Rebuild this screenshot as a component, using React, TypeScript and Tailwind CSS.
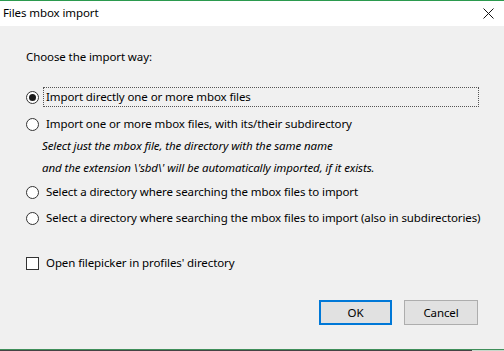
import React from "react";

const font = { fontFamily: '"Noto Sans", "Open Sans", sans-serif' };

function Radio({ checked }: { checked?: boolean }) {
  return (
    <span className="w-[13px] h-[13px] rounded-full border border-[#333333] bg-white flex items-center justify-center shrink-0">
      {checked && <span className="w-[7px] h-[7px] rounded-full bg-[#1a1a1a]" />}
    </span>
  );
}

export default function App() {
  return (
    <div
      className="w-[504px] h-[351px] flex flex-col bg-[#f0f0f0] text-[11.5px] tracking-[-0.1px] text-black overflow-hidden whitespace-nowrap"
      style={font}
    >
      <div className="h-[1px] bg-[#2b9a4e]" />
      <div className="h-[25px] bg-white flex items-center justify-between pl-[3px] pr-[10px]">
        <span className="leading-[16px] -mt-[1px]">Files mbox import</span>
        <svg width="11" height="11" viewBox="0 0 11 11" className="-mt-[1px]">
          <path d="M0.5 0.5 L10.5 10.5 M10.5 0.5 L0.5 10.5" stroke="#111" strokeWidth="1" />
        </svg>
      </div>
      <div className="flex-1 flex flex-col pl-[26px]">
        <div className="h-[16px] mt-[23px] leading-[16px]">Choose the import way:</div>

        <div className="h-[20px] mt-[22px] flex items-center">
          <Radio checked />
          <span className="ml-[4px] h-[20px] pl-[2px] pr-[2px] w-[436px] border border-dotted border-[#555] flex items-center leading-[16px]">
            Import directly one or more mbox files
          </span>
        </div>

        <div className="h-[20px] mt-[7px] flex items-center">
          <Radio />
          <span className="ml-[7px] leading-[16px]">Import one or more mbox files, with its/their subdirectory</span>
        </div>

        <div className="h-[20px] mt-[2px] flex items-center pl-[16px] italic leading-[16px]">
          Select just the mbox file, the directory with the same name
        </div>
        <div className="h-[20px] mt-[2px] flex items-center pl-[16px] italic leading-[16px]">
          and the extension \'sbd\' will be automatically imported, if it exists.
        </div>

        <div className="h-[20px] mt-[4px] flex items-center">
          <Radio />
          <span className="ml-[7px] leading-[16px]">Select a directory where searching the mbox files to import</span>
        </div>

        <div className="h-[20px] mt-[6px] flex items-center">
          <Radio />
          <span className="ml-[7px] leading-[16px]">
            Select a directory where searching the mbox files to import (also in subdirectories)
          </span>
        </div>

        <div className="h-[20px] mt-[25px] flex items-center">
          <span className="w-[13px] h-[13px] border border-[#333333] bg-white shrink-0" />
          <span className="ml-[7px] leading-[16px]">Open filepicker in profiles' directory</span>
        </div>

        <div className="mt-[27px] flex justify-end pr-[26px] gap-[12px]">
          <button className="w-[73px] h-[25px] border-2 border-[#0078d7] bg-[#e1e1e1] flex items-center justify-center leading-[16px]">
            OK
          </button>
          <button className="w-[74px] h-[25px] border border-[#adadad] bg-[#e1e1e1] flex items-center justify-center leading-[16px]">
            Cancel
          </button>
        </div>
      </div>
      <div className="h-[1px] bg-[#3f8f5a]" />
      <div className="h-[1px] flex">
        <div className="w-[472px] bg-[#444444]" />
        <div className="flex-1 bg-[#c8d8cc]" />
      </div>
    </div>
  );
}
